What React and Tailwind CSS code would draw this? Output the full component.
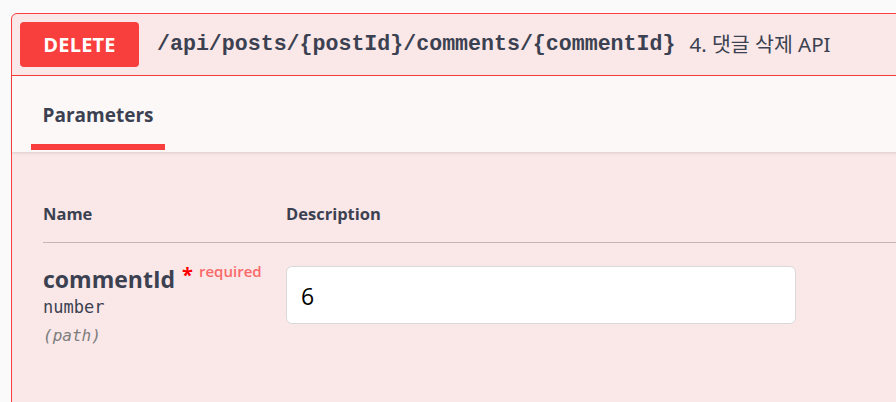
export default function App() {
  return (
    <div className="w-[896px] h-[402px] overflow-hidden bg-[#fafafa] pl-[11px] pt-[13px]" style={{ fontFamily: '"Open Sans", "Noto Sans CJK KR", sans-serif' }}>
      <div className="w-[900px] h-[420px] rounded-[6px] border border-[#f93e3e] bg-[#fae7e7] text-[#3b4151]">
        <div className="flex items-center h-[62px] border-b border-[#f93e3e] pl-[8px]">
          <div className="w-[119px] h-[45px] rounded-[4px] bg-[#f93e3e] text-white font-bold text-[20px] flex items-center justify-center tracking-[0.2px]">
            DELETE
          </div>
          <div className="ml-[18px] text-[21.6px] font-semibold text-[#3b4151]" style={{ fontFamily: '"Liberation Mono", monospace' }}>
            /api/posts/{"{"}postId{"}"}/comments/{"{"}commentId{"}"}
          </div>
          <div className="ml-[14px] text-[20.5px] text-[#3b4151]" style={{ fontFamily: '"Noto Sans", "Noto Sans CJK KR", sans-serif' }}>
            4. 댓글 삭제 API
          </div>
        </div>
        <div className="h-[76px] bg-[#fdf8f8] shadow-[0_1px_3px_rgba(0,0,0,0.12)] flex items-end pl-[19px]">
          <div className="flex flex-col items-center w-[134px] mb-[2px]">
            <div className="text-[19px] font-bold text-[#3b4151] leading-none">Parameters</div>
            <div className="mt-[19px] h-[6px] w-[134px] bg-[#f93e3e]"></div>
          </div>
        </div>
        <div className="pl-[31px] pt-[50px]">
          <div className="flex text-[16.5px] font-bold text-[#3b4151] border-b border-[#c2b6b8] h-[41px] items-start">
            <div className="w-[243px]">Name</div>
            <div>Description</div>
          </div>
          <div className="flex pt-[22px]">
            <div className="w-[243px]">
              <div className="flex items-start">
                <span className="text-[23px] font-bold leading-[28px] text-[#3b4151]">commentId</span>
                <span className="ml-[7px] text-[20px] leading-[20px] font-bold text-[#ff0000]">*</span>
                <span className="ml-[6px] text-[15px] font-semibold text-[#fb6a6a] leading-[16px] mt-[-2px]">required</span>
              </div>
              <div className="mt-[2px] text-[17px] text-[#3b4151]" style={{ fontFamily: '"DejaVu Sans Mono", monospace' }}>number</div>
              <div className="mt-[3px] text-[16px] italic text-[#7d7d7d]" style={{ fontFamily: '"DejaVu Sans Mono", monospace' }}>(path)</div>
            </div>
            <div className="mt-[1px] w-[510px] h-[58px] bg-white border border-[#d9d9d9] rounded-[6px] flex items-center pl-[14px] pt-[3px] text-[23px] text-black">
              6
            </div>
          </div>
        </div>
      </div>
    </div>
  );
}
